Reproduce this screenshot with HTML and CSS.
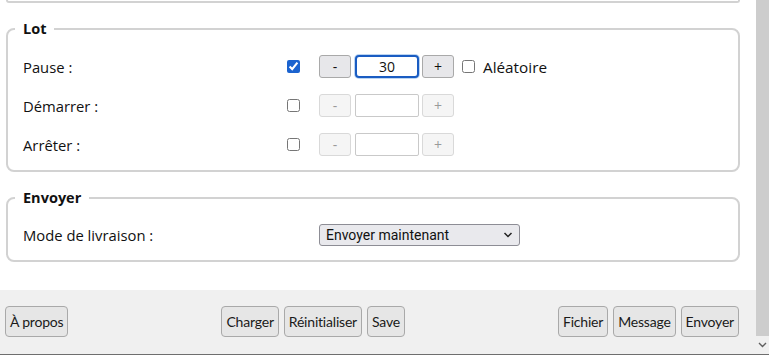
FILE: index.html
```html
<!DOCTYPE html>
<html>
  <head>
    <meta charset="UTF-8">
    <title>Envoi par lot</title>
    <link rel="stylesheet" href="styles.css">
  </head>
  <body>
  <div class="window">
    <div class="content">
      <div class="form">
        <div class="prev-box"></div>

        <fieldset class="group">
          <legend>Lot</legend>
          <div class="rows">
            <div class="row">
              <span class="label">Pause :</span>
              <input type="checkbox" class="tick" checked>
              <div class="spin">
                <button class="step">-</button>
                <input class="num focused" value="30">
                <button class="step">+</button>
                <label class="option"><input type="checkbox" class="tick"> Aléatoire</label>
              </div>
            </div>
            <div class="row">
              <span class="label">Démarrer :</span>
              <input type="checkbox" class="tick">
              <div class="spin">
                <button class="step" disabled>-</button>
                <input class="num" value="">
                <button class="step" disabled>+</button>
              </div>
            </div>
            <div class="row">
              <span class="label">Arrêter :</span>
              <input type="checkbox" class="tick">
              <div class="spin">
                <button class="step" disabled>-</button>
                <input class="num" value="">
                <button class="step" disabled>+</button>
              </div>
            </div>
          </div>
        </fieldset>

        <fieldset class="group">
          <legend>Envoyer</legend>
          <div class="row send">
            <span class="label">Mode de livraison :</span>
            <div class="select">
              <span>Envoyer maintenant</span>
              <svg width="10" height="6" viewBox="0 0 10 6"><path d="M1.5 1 L5 4.5 L8.5 1" fill="none" stroke="#222" stroke-width="1.5"/></svg>
            </div>
          </div>
        </fieldset>
      </div>

      <div class="footer">
        <div class="btns">
          <button class="btn">À propos</button>
        </div>
        <div class="btns">
          <button class="btn">Charger</button>
          <button class="btn">Réinitialiser</button>
          <button class="btn">Save</button>
        </div>
        <div class="btns">
          <button class="btn">Fichier</button>
          <button class="btn">Message</button>
          <button class="btn">Envoyer</button>
        </div>
      </div>
    </div>

    <div class="scrollbar">
      <div class="thumb"></div>
      <div class="arrow">
        <svg width="9" height="6" viewBox="0 0 9 6"><path d="M1 1 L4.5 4.5 L8 1" fill="none" stroke="#606060" stroke-width="1.4"/></svg>
      </div>
    </div>
  </div>
  </body>
</html>
```

FILE: styles.css
```css
body {
  margin: 0;
  background-color: #ffffff;
  color: #111111;
  font-family: "Open Sans", "Noto Sans", sans-serif;
  font-size: 14.8px;
  }

.window {
  display: flex;
  height: 354px;
  border-bottom: 1px solid #6e6e6e;
  }

.content {
  width: 756px;
  display: flex;
  flex-direction: column;
  }

.form {
  flex: 1;
  }

/* bottom of the group above, scrolled out of view */
.prev-box {
  height: 1px;
  margin: 0 16px 0 6px;
  border: 2px solid #d2d2d2;
  border-top: none;
  border-radius: 0 0 8px 8px;
  }

.group {
  margin: 16px 16px 0 6px;
  padding: 0 15px 14px 15px;
  border: 2px solid #d2d2d2;
  border-radius: 8px;
  }

.group legend {
  margin-left: -8px;
  padding: 0 8px;
  font-weight: bold;
  font-size: 14.5px;
  line-height: 20px;
  }

.rows {
  display: flex;
  flex-direction: column;
  gap: 16px;
  padding-top: 16px;
  }

.row {
  display: grid;
  grid-template-columns: 264px 32px auto;
  align-items: center;
  height: 23px;
  }

.row.send {
  grid-template-columns: 296px auto;
  padding-top: 16px;
  height: 22px;
  }

.tick {
  margin: 0;
  width: 13px;
  height: 13px;
  accent-color: #1b63cf;
  }

.spin {
  display: flex;
  align-items: center;
  }

.step {
  width: 32px;
  height: 23px;
  padding: 0;
  border: 1px solid #a9a9a9;
  border-radius: 3px;
  background: #e7e7ea;
  color: #111111;
  font-family: "Open Sans", sans-serif;
  font-size: 14px;
  }

.step:disabled {
  border-color: #d9d9d9;
  background: #f5f5f5;
  color: #9a9a9a;
  }

.num {
  box-sizing: border-box;
  width: 64px;
  height: 23px;
  margin: 0 3px 0 4px;
  border: 1px solid #c9c9c9;
  border-radius: 2px;
  text-align: center;
  font-family: "Open Sans", sans-serif;
  font-size: 14px;
  color: #111111;
  }

.num.focused {
  border: 2px solid #1a5cc2;
  border-radius: 4px;
  box-shadow: 0 0 0 1px #bcd5f2;
  outline: none;
  }

.option {
  display: flex;
  align-items: center;
  gap: 8px;
  margin-left: 8px;
  font-size: 15.3px;
  }

.select {
  box-sizing: border-box;
  width: 201px;
  height: 22px;
  display: flex;
  align-items: center;
  justify-content: space-between;
  padding: 0 6px 0 6px;
  border: 1px solid #8d8d95;
  border-radius: 3px;
  background: #e9e9ed;
  font-family: Roboto, sans-serif;
  font-size: 14px;
  color: #111111;
  }

.footer {
  height: 64px;
  box-sizing: border-box;
  padding: 16px 17px 0 5px;
  background: #f0f0f0;
  display: flex;
  justify-content: space-between;
  align-items: flex-start;
  }

.btns {
  display: flex;
  gap: 5px;
  }

.btn {
  height: 31px;
  padding: 0 4px;
  border: 1px solid #a9a9a9;
  border-radius: 4px;
  background: #e6e6e6;
  font-family: Lato, sans-serif;
  font-size: 14px;
  letter-spacing: -0.2px;
  color: #1a1a1a;
  }

.scrollbar {
  width: 13px;
  display: flex;
  flex-direction: column;
  background: #f0f0f0;
  }

.thumb {
  flex: 1;
  background: #cdcdcd;
  }

.arrow {
  height: 18px;
  display: flex;
  align-items: center;
  justify-content: center;
  }
```
